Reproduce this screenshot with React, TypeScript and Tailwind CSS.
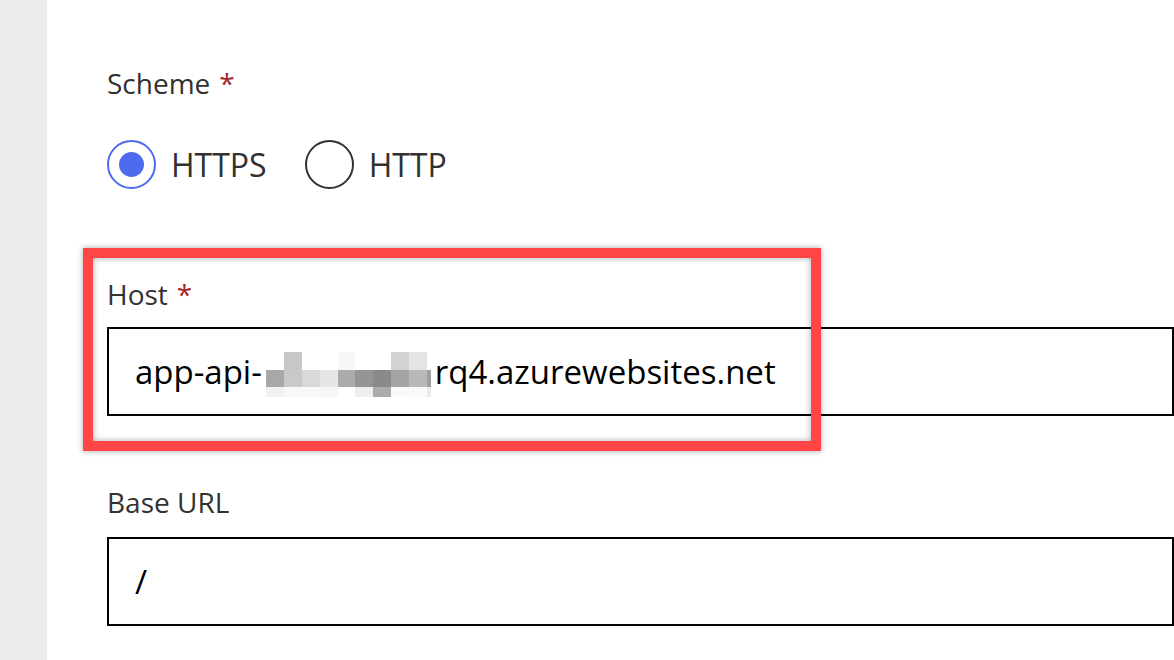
import React from 'react';

const font = { fontFamily: '"Open Sans", "Noto Sans", sans-serif' };

const Label: React.FC<{ text: string; required?: boolean }> = ({ text, required }) => (
  <div className="text-[28px] leading-[36px] text-[#323130]">
    {text}
    {required && <span className="ml-[9px] text-[#a4262c]">*</span>}
  </div>
);

const Radio: React.FC<{ label: string; checked?: boolean }> = ({ label, checked }) => (
  <label className="flex items-center gap-[15px]">
    <span
      className={
        'flex h-[49px] w-[49px] items-center justify-center rounded-full border-2 ' +
        (checked ? 'border-[#4f6bed]' : 'border-[#323130]')
      }
    >
      {checked && <span className="h-[25px] w-[25px] rounded-full bg-[#4f6bed]" />}
    </span>
    <span className="text-[32px] leading-[44px] text-[#323130]">{label}</span>
  </label>
);

const Blur: React.FC = () => {
  // pixelated mosaic standing in for the redacted part of the host name
  const mid = ['#a8a8a8', '#c9c9c9', '#d9d9d9', '#e6e6e6', '#ababab', '#959595', '#8a8a8a', '#a5a5a5', '#b9b9b9', '#9f9f9f'];
  const top = ['#fff', '#c7c7c7', '#fff', '#fff', '#f8f8f8', '#fff', '#fff', '#d2d2d2', '#e4e4e4', '#fff'];
  const bot = ['#f1f1f1', '#f8f8f8', '#f8f8f8', '#f6f6f6', '#fff', '#eeeeee', '#ababab', '#f9f9f9', '#fafafa', '#ebebeb'];
  const widths = ['w-[18px]', 'w-[18px]', 'w-[18px]', 'w-[18px]', 'w-[17px]', 'w-[18px]', 'w-[18px]', 'w-[18px]', 'w-[18px]', 'w-[4px]'];
  return (
    <span className="mx-[4px] mt-[6px] inline-flex flex-col">
      {[top, mid, bot].map((row, r) => (
        <span key={r} className={'flex ' + (r === 2 ? 'h-[10px]' : r === 0 ? 'h-[18px]' : 'h-[17px]')}>
          {row.map((c, i) => (
            <span key={i} className={widths[i]} style={{ background: c }} />
          ))}
        </span>
      ))}
    </span>
  );
};

export default function App() {
  return (
    <div className="flex h-[660px] w-[1174px] overflow-hidden bg-white" style={font}>
      <div className="w-[47px] shrink-0 bg-[#ebebeb]" />
      <div className="flex-1 pl-[60px] pt-[65px]">
        <Label text="Scheme" required />

        <div className="mt-[39px] flex items-center gap-[38px]">
          <Radio label="HTTPS" checked />
          <Radio label="HTTP" />
        </div>

        <div className="relative mt-[87px]">
          <div className="pointer-events-none absolute left-[-24px] top-[-28px] h-[203px] w-[738px] border-[10px] border-[#ff4545] shadow-[0_0_6px_rgba(0,0,0,0.35),inset_0_0_6px_rgba(0,0,0,0.35)]" />
          <Label text="Host" required />
          <div className="mt-[15px] flex h-[89px] items-center border-2 border-black pl-[26px] text-[33px] text-black">
            <span>app-api-</span>
            <Blur />
            <span>rq4.azurewebsites.net</span>
          </div>
        </div>

        <div className="mt-[68px]">
          <Label text="Base URL" />
          <div className="mt-[17px] flex h-[89px] items-center border-2 border-black pl-[26px] text-[33px] text-black">
            /
          </div>
        </div>
      </div>
    </div>
  );
}
